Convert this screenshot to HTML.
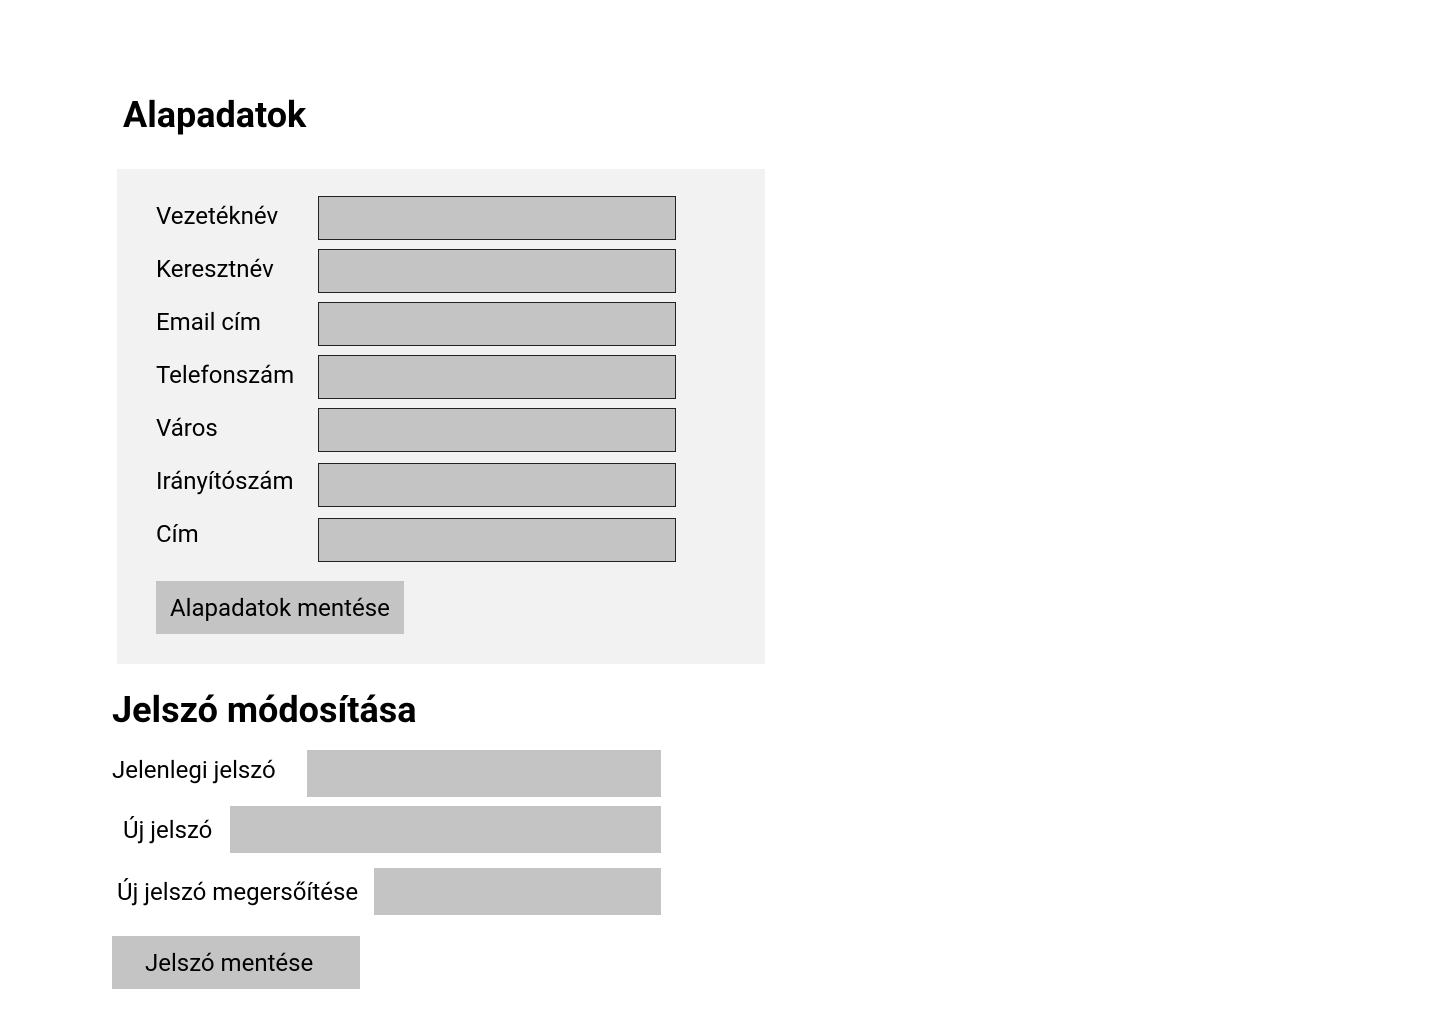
<!DOCTYPE html>
<html><head><meta charset="utf-8"><style>
body{margin:0;width:1440px;height:1024px;background:#fff;font-family:"Roboto","Liberation Sans",sans-serif;color:#000;position:relative;overflow:hidden}
.a{position:absolute}
h1{position:absolute;margin:0;font-size:36px;font-weight:bold;line-height:40px}
.l{position:absolute;font-size:24px;line-height:26px}
.i{position:absolute;left:318px;width:356px;height:42px;background:#c4c4c4;border:1px solid #222}
.p{position:absolute;background:#c4c4c4}
.b{position:absolute;background:#c4c4c4;font-size:24px;line-height:55px;height:53px;width:248px}
</style></head><body>
<h1 style="left:123px;top:95px">Alapadatok</h1>
<div class="a" style="left:117px;top:169px;width:648px;height:495px;background:#f2f2f2"></div>
<div class="l" style="left:156px;top:203px">Vezetéknév</div><div class="i" style="top:196px"></div>
<div class="l" style="left:156px;top:256px">Keresztnév</div><div class="i" style="top:249px"></div>
<div class="l" style="left:156px;top:309px">Email cím</div><div class="i" style="top:302px"></div>
<div class="l" style="left:156px;top:362px">Telefonszám</div><div class="i" style="top:355px"></div>
<div class="l" style="left:156px;top:415px">Város</div><div class="i" style="top:408px"></div>
<div class="l" style="left:156px;top:468px">Irányítószám</div><div class="i" style="top:463px"></div>
<div class="l" style="left:156px;top:521px">Cím</div><div class="i" style="top:518px"></div>
<div class="b" style="left:156px;top:581px;text-indent:14px">Alapadatok mentése</div>
<h1 style="left:112px;top:690px">Jelszó módosítása</h1>
<div class="l" style="left:112px;top:757px">Jelenlegi jelszó</div><div class="p" style="left:307px;top:750px;width:354px;height:47px"></div>
<div class="l" style="left:123px;top:817px">Új jelszó</div><div class="p" style="left:230px;top:806px;width:431px;height:47px"></div>
<div class="l" style="left:117px;top:879px">Új jelszó megersőítése</div><div class="p" style="left:374px;top:868px;width:287px;height:47px"></div>
<div class="b" style="left:112px;top:936px;text-indent:33px">Jelszó mentése</div>
</body></html>
